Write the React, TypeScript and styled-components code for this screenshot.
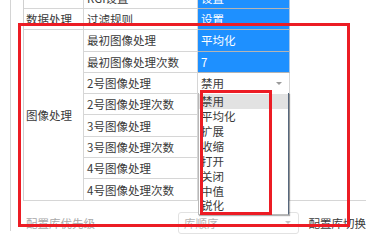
import { Fragment } from "react";
import styled, { createGlobalStyle } from "styled-components";

const GlobalStyle = createGlobalStyle`
  html, body {
    margin: 0;
    padding: 0;
    background: #ffffff;
    overflow: hidden;
  }
  body {
    font-family: "Noto Sans CJK SC", "Noto Sans", sans-serif;
    font-size: 11.5px;
    color: #3a3a3a;
  }
`;

const Page = styled.div`
  position: relative;
  width: 366px;
  height: 243px;
  overflow: hidden;
`;

const Panel = styled.div`
  margin-left: 10px;
  height: 100%;
  border-left: 1px solid #d4d4d4;
  padding-left: 12px;
`;

const Table = styled.div`
  display: grid;
  grid-template-columns: 60px 114px 92px 1fr;
  grid-auto-rows: 21.3px;
  margin-top: -12.3px;
  border-left: 1px solid #d0d0d0;
`;

const Cell = styled.div<{ $span?: number; $blue?: boolean; $pad?: number }>`
  box-sizing: border-box;
  display: flex;
  align-items: center;
  justify-content: space-between;
  padding-left: ${(p) => p.$pad ?? 3}px;
  white-space: nowrap;
  grid-row: ${(p) => (p.$span ? `span ${p.$span}` : "auto")};
  border-right: 1px solid ${(p) => (p.$blue ? "#a9c8ea" : "#d6d6d6")};
  border-bottom: 1px solid ${(p) => (p.$blue ? "#b4b4b4" : "#d6d6d6")};
  background: ${(p) => (p.$blue ? "#1e90ff" : "#ffffff")};
  color: ${(p) => (p.$blue ? "#ffffff" : "#3a3a3a")};
  position: relative;
`;

const Filler = styled.div`
  grid-column: 4;
  grid-row: 1 / span 10;
  border-bottom: 1px solid #d6d6d6;
`;

const Caret = styled.span<{ $color?: string }>`
  width: 0;
  height: 0;
  margin-right: 7px;
  border-left: 3px solid transparent;
  border-right: 3px solid transparent;
  border-top: 3px solid ${(p) => p.$color ?? "#9a9a9a"};
`;

const DropList = styled.div`
  position: absolute;
  top: 100%;
  left: 0;
  width: 91px;
  box-sizing: border-box;
  padding-top: 1px;
  height: 122px;
  background: #ffffff;
  border: 1px solid #b8b8b8;
  border-right-color: #56677d;
  border-top: none;
  box-shadow: 1px 1px 1px rgba(0, 0, 0, 0.3);
  z-index: 2;
`;

const DropItem = styled.div<{ $active?: boolean }>`
  height: 14.9px;
  line-height: 14.9px;
  padding-left: 2px;
  background: ${(p) => (p.$active ? "#e2e2e2" : "transparent")};
  color: #3a3a3a;
`;

const Footer = styled.div`
  display: flex;
  align-items: center;
  padding: 11px 0 0 3px;
`;

const FooterLabel = styled.span<{ $muted?: boolean }>`
  flex: 0 0 auto;
  white-space: nowrap;
  color: ${(p) => (p.$muted ? "#a8a8a8" : "#3a3a3a")};
`;

const SelectBox = styled.div`
  box-sizing: border-box;
  display: flex;
  align-items: center;
  justify-content: space-between;
  width: 121px;
  height: 22px;
  margin: 0 10px 0 83px;
  padding-left: 5px;
  border: 1px solid #e2e2e2;
  border-radius: 3px;
  color: #b4b4b4;
`;

const Mark = styled.div<{ $x: number; $y: number; $w: number; $h: number }>`
  position: absolute;
  left: ${(p) => p.$x}px;
  top: ${(p) => p.$y}px;
  width: ${(p) => p.$w}px;
  height: ${(p) => p.$h}px;
  box-sizing: border-box;
  border: 3px solid #ec1c24;
  z-index: 5;
  pointer-events: none;
`;

const ops = ["禁用", "平均化", "扩展", "收缩", "打开", "关闭", "中值", "锐化"];

const lowerRows = ["2号图像处理次数", "3号图像处理", "3号图像处理次数", "4号图像处理", "4号图像处理次数"];

export default function App() {
  return (
    <Page>
      <GlobalStyle />
      <Panel>
        <Table>
          <Cell $pad={2} />
          <Cell>RGI设置</Cell>
          <Cell $blue>设置</Cell>

          <Cell $pad={2}>数据处理</Cell>
          <Cell>过滤规则</Cell>
          <Cell $blue>设置</Cell>

          <Cell $pad={2} $span={8}>图像处理</Cell>
          <Cell>最初图像处理</Cell>
          <Cell $blue>平均化</Cell>

          <Cell>最初图像处理次数</Cell>
          <Cell $blue>7</Cell>

          <Cell>2号图像处理</Cell>
          <Cell>
            禁用
            <Caret />
            <DropList>
              {ops.map((o, i) => (
                <DropItem key={o} $active={i === 0}>
                  {o}
                </DropItem>
              ))}
            </DropList>
          </Cell>

          {lowerRows.map((r) => (
            <Fragment key={r}>
              <Cell>{r}</Cell>
              <Cell />
            </Fragment>
          ))}
          <Filler />
        </Table>

        <Footer>
          <FooterLabel $muted>配置库优先级</FooterLabel>
          <SelectBox>
            库顺序
            <Caret $color="#c4c4c4" />
          </SelectBox>
          <FooterLabel>配置库切换</FooterLabel>
        </Footer>
      </Panel>

      <Mark $x={18} $y={22.5} $w={332} $h={204} />
      <Mark $x={200} $y={90} $w={72} $h={125} />
    </Page>
  );
}
